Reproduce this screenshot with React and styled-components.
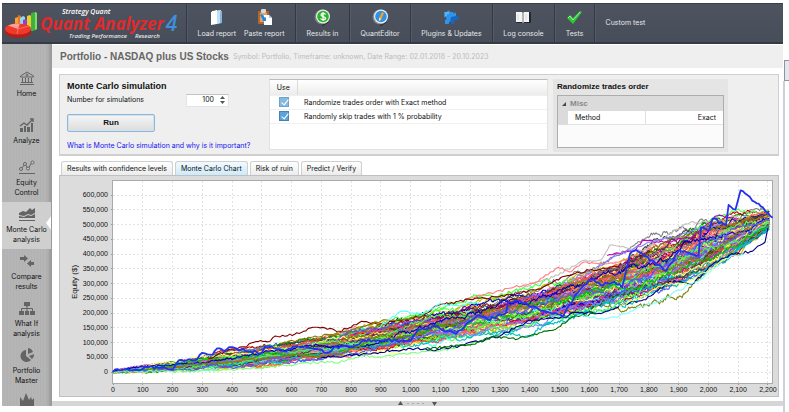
import React from "react";
import styled, { createGlobalStyle, css } from "styled-components";

const Global = createGlobalStyle`
  * { box-sizing: border-box; }
  body { margin: 0; background: #fff; font: 7px/10px Inter, "Liberation Sans", Arial, sans-serif; color: #111; }
  button, input { font: inherit; color: inherit; margin: 0; }
  svg { display: block; flex: none; }
`;

const Shell = styled.div`
  height: 100vh;
  display: flex;
  padding: 3px 0 6px 2px;
  overflow: hidden;
`;
const Window = styled.div`
  flex: 1;
  min-width: 0;
  display: flex;
  flex-direction: column;
`;
const ScrollRail = styled.div`
  width: 6px;
  padding-top: 57px;
  &::before {
    content: "";
    display: block;
    height: 19px;
    margin-left: 1px;
    background: #e3e6ec;
    border: 1px solid #8d93a3;
    border-right: 0;
  }
  &::after {
    content: "";
    display: block;
    width: 2px;
    height: 100%;
    background: #cdd0d8;
  }
`;

/* Toolbar */
const Toolbar = styled.header`
  height: 41px;
  flex: none;
  display: flex;
  background: linear-gradient(#4d535f, #474d59);
  border-top: 1px solid #3a4049;
  border-bottom: 2px solid #353b45;
  color: #e6e8eb;
  overflow: hidden;
`;
const Brand = styled.div`
  width: 184px;
  display: flex;
  padding: 4px 0 0 2px;
  gap: 2px;
  font-family: "Open Sans", "Noto Sans", sans-serif;
  font-style: italic;
`;
const BrandText = styled.div`
  display: flex;
  flex-direction: column;
`;
const BrandTop = styled.div`
  padding-left: 22px;
  font-size: 7px;
  line-height: 7px;
  font-weight: 600;
  color: #fff;
  white-space: nowrap;
`;
const BrandName = styled.div`
  font-size: 17px;
  line-height: 17px;
  font-weight: 700;
  color: #e02a2c;
  white-space: nowrap;
`;
const BrandTag = styled.div`
  display: flex;
  gap: 8px;
  padding-left: 29px;
  font-size: 6px;
  line-height: 8px;
  font-weight: 600;
  color: #e8e8e8;
`;
const BrandVersion = styled.span`
  padding-top: 5px;
  font-size: 21px;
  line-height: 21px;
  font-weight: 600;
  color: #3f8fdd;
`;
const ToolGroup = styled.div`
  display: flex;
  justify-content: center;
  gap: 8px;
  width: ${(p) => p.$width}px;
  border-left: 1px solid #333943;
  box-shadow: inset 1px 0 #555c68;
`;
const ToolButton = styled.button`
  border: 0;
  padding: 5px 0 0;
  background: none;
  display: flex;
  flex-direction: column;
  align-items: center;
  gap: 3px;
  white-space: nowrap;
`;
const TextTool = styled.button`
  border: 0;
  background: none;
  padding: 0 0 0 2px;
`;

/* Side navigation */
const Body = styled.div`
  flex: 1;
  min-height: 0;
  display: flex;
`;
const Side = styled.nav`
  width: 50px;
  flex: none;
  padding-top: 17px;
  overflow: hidden;
  background:
    linear-gradient(90deg, transparent 44px, #0001 47px, #0003 50px),
    repeating-linear-gradient(90deg, #b5b5b5 0 2px, #b2b2b2 2px 3px);
  border-right: 1px solid #9a9a9a;
`;
const SideItem = styled.a`
  position: relative;
  height: 47px;
  display: flex;
  flex-direction: column;
  align-items: center;
  justify-content: center;
  gap: 4px;
  color: #111;
  text-align: center;
  text-decoration: none;
  white-space: pre-line;
  svg { color: #646464; }
  ${(p) =>
    p.$active &&
    css`
      background: #cfcfcf;
      &::after {
        content: "";
        position: absolute;
        right: -1px;
        top: 13px;
        border: solid transparent;
        border-width: 8px 6px 8px 0;
        border-right-color: #fff;
      }
    `}
`;
const NextItem = styled(SideItem)`
  justify-content: flex-start;
  padding-top: 3px;
`;

/* Main column */
const Main = styled.main`
  flex: 1;
  min-width: 0;
  display: flex;
  flex-direction: column;
`;
const TitleBar = styled.div`
  height: 24px;
  flex: none;
  display: flex;
  align-items: center;
  gap: 4px;
  padding: 1px 8px 0;
  background: #efefef;
  border-top: 1px solid #fff;
  color: #bcbcbc;
  white-space: nowrap;
`;
const Title = styled.h1`
  margin: 0;
  font-family: "Liberation Sans", Arial, sans-serif;
  font-size: 10px;
  line-height: 12px;
  color: #666;
`;
const Content = styled.div`
  padding: 6px 4px 0 7px;
`;
const Settings = styled.section`
  height: 82px;
  display: flex;
  background: #efefef;
  border: 1px solid #cfcfcf;
  border-bottom-width: 2px;
  padding: 4px 0 0;
`;
const SimForm = styled.form`
  width: 209px;
  padding: 1px 0 0 7px;
`;
const Heading = styled.h2`
  margin: 0;
  font-family: "Liberation Sans", Arial, sans-serif;
  font-size: 9px;
  line-height: 12px;
  color: #111;
`;
const Field = styled.div`
  display: flex;
  justify-content: space-between;
  align-items: center;
  padding-right: 40px;
  height: 16px;
`;
const Spinner = styled.div`
  display: flex;
  align-items: center;
  width: 43px;
  height: 13px;
  padding-right: 3px;
  background: #fff;
  border: 1px solid #e4e4e4;
  border-top-color: #c2c2c2;
`;
const SpinnerInput = styled.input`
  flex: 1;
  min-width: 0;
  border: 0;
  padding: 0 6px 0 0;
  background: none;
  text-align: right;
`;
const RunButton = styled.button`
  display: block;
  width: 88px;
  height: 18px;
  margin: 6px 0 9px;
  border: 1px solid #8fb6d4;
  border-radius: 2px;
  background: linear-gradient(#f6f6f6, #dcdcdc);
  box-shadow: inset 0 0 0 1px #cfe2f0;
  font-family: "Liberation Sans", Arial, sans-serif;
  font-size: 8px;
  font-weight: 700;
`;
const HelpLink = styled.a`
  color: #1414f0;
  text-decoration: none;
  white-space: nowrap;
`;
const OptionTable = styled.div`
  width: 279px;
  height: 71px;
  background: #fff;
  border: 1px solid #e2e2e2;
  border-top-color: #bdbdbd;
  table { width: 100%; border-collapse: collapse; }
  tr { height: 14px; }
  thead tr { height: 15px; }
  th, td { padding: 1px 7px 0; border-bottom: 1px solid #f0f0f0; text-align: left; font-weight: 400; }
  th { background: linear-gradient(#fff, #ececec); }
  th:first-child { width: 27px; padding: 1px 0 0; border-right: 1px solid #dcdcdc; text-align: center; }
  td:first-child { padding: 0; text-align: center; }
`;
const Check = styled.input`
  appearance: none;
  display: block;
  width: 10px;
  height: 10px;
  margin: 0 auto;
  border: 1px solid #4683ad;
  background: #5ba3d8;
  opacity: ${(p) => (p.$muted ? 0.75 : 1)};
  &::before {
    content: "";
    display: block;
    width: 3px;
    height: 6px;
    margin: 0 0 0 3px;
    border: solid #fff;
    border-width: 0 1px 1px 0;
    transform: rotate(38deg);
  }
`;
const Props = styled.div`
  width: 175px;
  height: 73px;
  margin-left: 5px;
  padding: 2px 4px 0;
  background: #e5e5e5;
`;
const PropsTitle = styled.h3`
  margin: 0 0 2px;
  font-family: "Liberation Sans", Arial, sans-serif;
  font-size: 8px;
  line-height: 12px;
  color: #111;
`;
const PropsBox = styled.div`
  height: 53px;
  background: #fbfbfb;
  border: 1px solid #adadad;
`;
const PropsGroup = styled.div`
  display: flex;
  align-items: center;
  gap: 4px;
  height: 15px;
  padding-left: 4px;
  background: #dbdbdb;
  font-family: "Liberation Sans", Arial, sans-serif;
  font-size: 8px;
  font-weight: 700;
  color: #8a8a8a;
`;
const PropsRow = styled.div`
  display: flex;
  height: 14px;
  padding-left: 10px;
  background: #dbdbdb;
  line-height: 13px;
`;
const PropsCell = styled.div`
  flex: 1;
  padding: 0 7px;
  background: #fff;
  border-bottom: 1px solid #e3e3e3;
  text-align: ${(p) => (p.$value ? "right" : "left")};
  border-left: ${(p) => (p.$value ? "1px solid #e0e0e0" : "0")};
`;

const Tabs = styled.div`
  display: flex;
  gap: 2px;
  padding: 5px 2px 0;
`;
const Tab = styled.button`
  height: 14px;
  padding: 1px 5px 0;
  border: 1px solid #cfcfcf;
  border-bottom: 0;
  border-radius: 3px 3px 0 0;
  background: ${(p) => (p.$active ? "linear-gradient(#f2faff, #cdeafa)" : "linear-gradient(#fff, #ececec)")};
  white-space: nowrap;
`;
const ChartPanel = styled.section`
  background: #dcdcdc;
  border: 1px solid #c0c0c0;
`;
const ChartSvg = styled.svg`
  width: 100%;
  height: auto;
  font-family: "Liberation Sans", Arial, sans-serif;
  font-size: 7px;
  fill: #111;
`;
const Splitter = styled.div`
  margin-top: auto;
  height: 5px;
  flex: none;
  display: flex;
  justify-content: center;
  background: #d6d6d6;
`;

/* Chart data */
const PALETTE = [
  "#ff5555", "#5555ff", "#00c000", "#ffff55", "#ff55ff", "#55ffff", "#ffafaf", "#808080", "#c00000",
  "#0000c0", "#55ff55", "#c0c000", "#c000c0", "#00c0c0", "#404040", "#ff4040", "#8080ff", "#40ff40",
  "#ffff40", "#ff40ff", "#800000", "#008080", "#008000", "#808000", "#800080", "#ff8080", "#ffff80",
];
const LOW = [-2, 0, 3, 7, 12, 20, 31, 42, 55, 72, 88, 100, 114, 134, 156, 182, 202, 226, 262, 296, 345, 400, 478];
const HIGH = [4, 24, 36, 54, 70, 86, 102, 120, 145, 168, 188, 215, 238, 262, 284, 315, 350, 385, 428, 466, 505, 530, 545];

const at = (list, t) => {
  const i = Math.min(Math.floor(t / 100), list.length - 2);
  return list[i] + (list[i + 1] - list[i]) * (t / 100 - i);
};
const px = (t) => 53 + t * 0.2977;
const py = (v) => 196 - v * 0.295;
const makeRandom = (start) => {
  let s = start;
  return () => {
    s = (s * 1664525 + 1013904223) % 4294967296;
    return s / 4294967296;
  };
};
const random = makeRandom(4711);

const simulations = Array.from({ length: 120 }, () => {
  let target = (random() + random()) / 2;
  let q = target;
  let d = "";
  for (let t = 0; t <= 2204; t += 4) {
    if (random() < 0.014) target = 0.04 + (random() * 2 + random()) * 0.307;
    q += (target - q) * 0.02 + (random() - 0.5) * 0.09;
    const lo = at(LOW, Math.min(t, 2200));
    const hi = at(HIGH, Math.min(t, 2200));
    d += `${t ? "L" : "M"}${px(t).toFixed(1)} ${py(lo + (hi - lo) * q + (random() - 0.5) * 5).toFixed(1)}`;
  }
  return { d, color: PALETTE[Math.floor(random() * PALETTE.length)] };
});

const trace = (points, jitter) => {
  let d = "";
  points.forEach(([t, v], i) => {
    if (i === 0) {
      d = `M${px(t).toFixed(1)} ${py(v).toFixed(1)}`;
      return;
    }
    const [t0, v0] = points[i - 1];
    const steps = Math.max(1, Math.round((t - t0) / 8));
    for (let k = 1; k <= steps; k += 1) {
      const f = k / steps;
      const wobble = k === steps ? 0 : (random() - 0.5) * jitter;
      d += `L${px(t0 + (t - t0) * f).toFixed(1)} ${py(v0 + (v - v0) * f + wobble).toFixed(1)}`;
    }
  });
  return d;
};

const OUTLIERS = [
  ["#c0c0c0", [[1380, 290], [1480, 322], [1580, 378], [1640, 380], [1668, 430], [1720, 422], [1780, 412], [1860, 462], [1940, 508], [2010, 505], [2100, 530]]],
  ["#ff8080", [[1180, 245], [1340, 285], [1420, 305], [1495, 355], [1540, 340], [1575, 370], [1680, 368], [1760, 395]]],
  ["#c000c0", [[1660, 395], [1750, 410], [1778, 445], [1850, 440], [1940, 455], [2030, 530], [2100, 520]]],
  ["#8080ff", [[1620, 350], [1680, 390], [1800, 440], [1900, 460], [1940, 475], [2040, 500]]],
  ["#800000", [[320, 45], [400, 78], [440, 85], [480, 103], [520, 102], [545, 122], [610, 128], [640, 138], [680, 152], [760, 138], [800, 152], [835, 172], [890, 162], [1000, 182], [1040, 190], [1090, 225], [1200, 246], [1330, 262], [1420, 278], [1520, 325], [1600, 345], [1700, 358]]],
  ["#808000", [[560, 98], [640, 112], [780, 138], [900, 172], [980, 178], [1060, 192]]],
  ["#55ffff", [[890, 148], [930, 180], [965, 205], [1040, 198], [1100, 232], [1160, 225], [1230, 235]]],
  ["#80ff80", [[0, 0], [250, 3], [420, 10], [560, 20], [640, 32], [760, 32], [840, 55], [900, 50], [1000, 66], [1100, 72], [1200, 95], [1300, 120]]],
  ["#000080", [[700, 48], [850, 62], [1000, 80], [1090, 76], [1180, 92], [1300, 122], [1400, 176], [1500, 182], [1560, 202], [1640, 198], [1720, 232], [1790, 245], [1870, 308], [1950, 300], [2010, 362], [2070, 396], [2140, 408], [2190, 440], [2200, 488]]],
  ["#007000", [[1050, 80], [1200, 92], [1280, 120], [1360, 112], [1440, 134], [1480, 142], [1540, 185], [1620, 198]]],
  ["#80ffff", [[1560, 192], [1640, 182], [1700, 190], [1760, 218], [1840, 240], [1900, 278], [1960, 305], [2060, 385], [2120, 400]]],
  ["#ffff55", [[1700, 222], [1760, 248], [1860, 300], [1920, 300], [2000, 345], [2060, 385]]],
].map(([color, points]) => ({ color, d: trace(points, 9) }));

const EQUITY = trace([
  [0, 0], [15, 10], [98, 9], [108, 18], [200, 9], [222, 40], [283, 43], [300, 65], [334, 58], [350, 80], [373, 71],
  [390, 84], [429, 76], [500, 64], [510, 86], [541, 80], [575, 69], [620, 88], [726, 66], [742, 83], [810, 88],
  [843, 108], [882, 107], [1001, 106], [1024, 142], [1052, 144], [1074, 156], [1152, 129], [1225, 193],
  [1259, 178], [1320, 201], [1328, 238], [1359, 242], [1404, 221], [1511, 187], [1550, 255], [1572, 283],
  [1606, 314], [1639, 295], [1684, 306], [1710, 287], [1737, 402], [1757, 413], [1858, 343], [1903, 413],
  [1967, 396], [1975, 490], [2003, 481], [2014, 520], [2059, 498], [2068, 566], [2091, 551], [2108, 616],
  [2155, 577], [2183, 558], [2216, 523],
], 10);

const X_TICKS = Array.from({ length: 23 }, (_, i) => i * 100);
const Y_TICKS = Array.from({ length: 13 }, (_, i) => i * 50);

function EquityChart() {
  return (
    <ChartSvg viewBox="0 0 718 220" role="img" aria-label="Equity of Monte Carlo simulations">
      <rect x="53" y="5" width="659" height="202" fill="#fff" />
      <g stroke="#e2e2e2" strokeDasharray="2 2" shapeRendering="crispEdges">
        {X_TICKS.slice(1).map((t) => <line key={t} x1={px(t)} x2={px(t)} y1="5" y2="207" />)}
        {Y_TICKS.map((v) => <line key={v} x1="53" x2="712" y1={py(v)} y2={py(v)} />)}
      </g>
      <g stroke="#999" shapeRendering="crispEdges">
        {X_TICKS.map((t) => <line key={t} x1={px(t)} x2={px(t)} y1="207" y2="209" />)}
        {Y_TICKS.map((v) => <line key={v} x1="51" x2="53" y1={py(v)} y2={py(v)} />)}
      </g>
      <rect x="52.5" y="4.5" width="660" height="203" fill="none" stroke="#aaa" />
      <g fill="none" strokeLinejoin="round">
        {simulations.map((s, i) => <path key={i} d={s.d} stroke={s.color} strokeWidth="1.1" />)}
        {OUTLIERS.map((s) => <path key={s.color + s.d.length} d={s.d} stroke={s.color} strokeWidth="1.1" />)}
        <path d={EQUITY} stroke="#2432f0" strokeWidth="1.8" />
      </g>
      <g textAnchor="middle">
        {X_TICKS.map((t) => <text key={t} x={px(t)} y="216">{t.toLocaleString("en-US")}</text>)}
      </g>
      <g textAnchor="end">
        {Y_TICKS.map((v) => <text key={v} x="48" y={py(v) + 2}>{(v * 1000).toLocaleString("en-US")}</text>)}
      </g>
      <text fontSize="8" textAnchor="middle" transform="translate(17 106) rotate(-90)">Equity ($)</text>
    </ChartSvg>
  );
}

/* Icons */
const LogoMark = () => (
  <svg width="34" height="32" viewBox="0 0 34 32">
    <path d="M11 10l3-1v13l-3-1z" fill="#f6a431" />
    <path d="M14 7l3 1v14h-3z" fill="#e8781c" />
    <path d="M16 10l3-2 2 1v13h-5z" fill="#8fd6f5" />
    <path d="M19 12l3-1 2 1v10h-5z" fill="#9a3fc4" />
    <path d="M23 8l3-1 1 1v14h-4z" fill="#e9cf2b" />
    <path d="M27 5l4-1 2 1v16l-4 2h-2z" fill="#3fb13d" />
    <path d="M31 4l2 1v16l-2 1z" fill="#7fdc6c" />
    <path d="M1 21v3c0 7 24 8 26 1v-4z" fill="#b81d17" />
    <ellipse cx="14" cy="21" rx="13" ry="5.500" fill="#ee3a2c" />
    <path d="M14 21L4 17.500A13 5.500 0 0 1 16 15.500z" fill="#ff9d92" />
    <path d="M14 21l11-3M14 21l-1 5" stroke="#ff8278" strokeWidth=".7" />
  </svg>
);
const LoadIcon = () => (
  <svg width="17" height="17" viewBox="0 0 17 17">
    <path d="M4 2l9-1v13l-9 1z" fill="#d7e2ea" />
    <path d="M3 3l6-2v14l-6 1z" fill="#fff" />
    <path d="M9 3l5-1v12l-5 1z" fill="#7fb6e6" />
    <path d="M9 3l3-1v12l-3 1z" fill="#c6def2" />
  </svg>
);
const PasteIcon = () => (
  <svg width="17" height="17" viewBox="0 0 17 17">
    <rect x="2" y="2" width="11" height="13" rx="1" fill="#b3672a" />
    <rect x="4" y="4" width="7" height="9" fill="#d9a673" />
    <rect x="5" y="0" width="5" height="4" rx="1" fill="#d8d8d8" />
    <path d="M8 6h5l3 3v7H8z" fill="#fff" />
    <path d="M13 6v3h3z" fill="#b9c7d4" />
    <path d="M4 6l2-1 3 4 1-1v4H6l1-1z" fill="#2485d8" />
  </svg>
);
const ResultsIcon = () => (
  <svg width="17" height="17" viewBox="0 0 17 17">
    <path d="M2 12l7 5 6-4z" fill="#23272e" />
    <circle cx="8" cy="8" r="7.500" fill="#7d8084" />
    <circle cx="9" cy="7.500" r="7" fill="#e9ece9" />
    <circle cx="9" cy="7.500" r="5.800" fill="#2bb52c" />
    <path d="M11.500 5.500C10.500 4 7 4 7 6s4.500 1.200 4.500 3.200S7.500 11 6.500 9.500M9 3v9" fill="none" stroke="#fff" strokeWidth="1.300" />
  </svg>
);
const EditorIcon = () => (
  <svg width="17" height="17" viewBox="0 0 17 17">
    <path d="M2 12l7 5 6-4z" fill="#23272e" />
    <circle cx="8" cy="8" r="7.500" fill="#85888c" />
    <circle cx="9" cy="7.500" r="7" fill="#eceff2" />
    <circle cx="9" cy="7.500" r="5.800" fill="#2d93e8" />
    <path d="M10 3l2 1-3 7-2 1V9z" fill="#f0a02c" />
    <path d="M7 9l2 1-2 2z" fill="#fff3d6" />
  </svg>
);
const PluginIcon = () => (
  <svg width="17" height="17" viewBox="0 0 17 17">
    <path d="M1 3h3c0-2 3-2 3 0h3v2c1-2 3-2 3 0v2h3v3h-2c-1 0-1 2-3 1v4H8c1-3-3-3-2 0H2v-4c2 0 2-3 0-3H1z" fill="#2f95ea" />
    <path d="M8 8l5-1h3v3h-2c-1 0-1 2-3 1v4H8c0-2 0-2-1-2z" fill="#1966c0" />
    <path d="M2 4h4M3 5v2" stroke="#8fd0fa" />
  </svg>
);
const LogIcon = () => (
  <svg width="17" height="17" viewBox="0 0 17 17">
    <rect x="1" y="3" width="15" height="11" rx="1" fill="#23272d" />
    <path d="M1 3h6l1 1 1-1h5v10H9l-1 1-1-1H1z" fill="#f5f5f5" />
    <path d="M8 4v9" stroke="#777" />
    <path d="M3 5v6M11 5v6" stroke="#d8d8d8" />
  </svg>
);
const TestIcon = () => (
  <svg width="17" height="17" viewBox="0 0 17 17">
    <path d="M1 9l3-3 3 3 7-7 2 1-9 12z" fill="#2fc73a" />
    <path d="M2 9l2-2 3 4 7-8" fill="none" stroke="#98f08e" />
  </svg>
);

const Glyph = ({ children }) => (
  <svg width="16" height="14" viewBox="0 0 16 14" fill="none" stroke="currentColor">{children}</svg>
);
const HomeGlyph = () => (
  <Glyph>
    <path d="M1.500 5L8 1l6.500 4v1h-13zM3.500 7v4M6.500 7v4M9.500 7v4M12.500 7v4M2 11.500h12M1 13.500h14" />
    <circle cx="8" cy="4" r="1" />
  </Glyph>
);
const AnalyzeGlyph = () => (
  <Glyph>
    <path d="M1 14v-4h3v4zM5 14V8h2v6zM8 14V9h3v5zM12 14V5h2v9z" fill="currentColor" stroke="none" />
    <path d="M1 8l4-3 3 2 6-6M11 1h3v3" strokeWidth="1.400" />
  </Glyph>
);
const EquityGlyph = () => (
  <Glyph>
    <path d="M2 9l4-5 3 5 4-7M0 13.500h16" />
    <g fill="#c4c4c4"><circle cx="2" cy="9" r="1.500" /><circle cx="6" cy="4" r="1.500" /><circle cx="9" cy="8.500" r="1.500" /><circle cx="13.500" cy="2.500" r="1.500" /></g>
  </Glyph>
);
const MonteGlyph = () => (
  <Glyph>
    <path d="M0 6l4-2 3 1 4-4 2 2 3-2v5l-4 2-3-1-4 2-5-1zM0 9l5 1 4-2 3 1 4-2v4H0z" fill="currentColor" stroke="none" />
    <path d="M0 13.500h16" />
  </Glyph>
);
const CompareGlyph = () => (
  <Glyph><path d="M1 3h4V1l4 3.500L5 8V6H1zM15 8h-3V6L8 9.500l4 3.500v-2h3z" fill="currentColor" stroke="none" /></Glyph>
);
const WhatIfGlyph = () => (
  <Glyph>
    <path d="M5 1h6v4H9L8 6 7 5H5zM0 10h5v4H0zM6 10h4v4H6zM11 10h5v4h-5z" fill="currentColor" stroke="none" />
    <path d="M8 5v5M2.500 10V7.500h11V10" />
  </Glyph>
);
const PieGlyph = () => (
  <Glyph>
    <path d="M7 2v6l5 4A6 6 0 1 1 7 2z" fill="currentColor" stroke="none" />
    <path d="M9 0a6 6 0 0 1 5 4L9 6zM10 8l5-2a6 6 0 0 1-2 5z" fill="currentColor" stroke="none" />
  </Glyph>
);
const CrownGlyph = () => (
  <Glyph><path d="M1 14V4l3 4 3-8 3 7 2-3 1 3 2-2v9z" fill="currentColor" stroke="none" /></Glyph>
);

const TOOLS = [
  { width: 109, items: [["Load report", LoadIcon], ["Paste report", PasteIcon]] },
  { width: 54, items: [["Results in", ResultsIcon]] },
  { width: 61, items: [["QuantEditor", EditorIcon]] },
  { width: 82, items: [["Plugins & Updates", PluginIcon]] },
  { width: 62, items: [["Log console", LogIcon]] },
  { width: 40, items: [["Tests", TestIcon]] },
];
const NAV = [
  ["Home", HomeGlyph],
  ["Analyze", AnalyzeGlyph],
  ["Equity\nControl", EquityGlyph],
  ["Monte Carlo\nanalysis", MonteGlyph],
  ["Compare\nresults", CompareGlyph],
  ["What If\nanalysis", WhatIfGlyph],
  ["Portfolio\nMaster", PieGlyph],
];
const OPTIONS = ["Randomize trades order with Exact method", "Randomly skip trades with 1 % probability"];
const TABS = ["Results with confidence levels", "Monte Carlo Chart", "Risk of ruin", "Predict / Verify"];

export default function App() {
  return (
    <Shell>
      <Global />
      <Window>
        <Toolbar>
          <Brand>
            <LogoMark />
            <BrandText>
              <BrandTop>Strategy Quant</BrandTop>
              <BrandName>Quant Analyzer</BrandName>
              <BrandTag><span>Trading Performance</span><span>Research</span></BrandTag>
            </BrandText>
            <BrandVersion>4</BrandVersion>
          </Brand>
          {TOOLS.map((group) => (
            <ToolGroup key={group.width} $width={group.width}>
              {group.items.map(([label, Icon]) => (
                <ToolButton key={label} type="button"><Icon />{label}</ToolButton>
              ))}
            </ToolGroup>
          ))}
          <ToolGroup $width={60}><TextTool type="button">Custom test</TextTool></ToolGroup>
        </Toolbar>
        <Body>
          <Side>
            {NAV.map(([label, Icon]) => (
              <SideItem key={label} href="#" $active={Icon === MonteGlyph}>
                <Icon />
                <span>{label}</span>
              </SideItem>
            ))}
            <NextItem href="#"><CrownGlyph /></NextItem>
          </Side>
          <Main>
            <TitleBar>
              <Title>Portfolio - NASDAQ plus US Stocks</Title>
              <span>Symbol: Portfolio, Timeframe: unknown, Date Range: 02.01.2018 - 20.10.2023</span>
            </TitleBar>
            <Content>
              <Settings>
                <SimForm>
                  <Heading>Monte Carlo simulation</Heading>
                  <Field>
                    <label htmlFor="count">Number for simulations</label>
                    <Spinner>
                      <SpinnerInput id="count" defaultValue="100" />
                      <svg width="5" height="8" viewBox="0 0 5 8" fill="#555"><path d="M0 3l2.500-3L5 3zM0 5l2.500 3L5 5z" /></svg>
                    </Spinner>
                  </Field>
                  <RunButton type="button">Run</RunButton>
                  <HelpLink href="#">What is Monte Carlo simulation and why is it important?</HelpLink>
                </SimForm>
                <OptionTable>
                  <table>
                    <thead><tr><th>Use</th><th aria-label="Option" /></tr></thead>
                    <tbody>
                      {OPTIONS.map((text, i) => (
                        <tr key={text}>
                          <td><Check type="checkbox" id={`opt${i}`} defaultChecked $muted={i === 0} /></td>
                          <td><label htmlFor={`opt${i}`}>{text}</label></td>
                        </tr>
                      ))}
                    </tbody>
                  </table>
                </OptionTable>
                <Props>
                  <PropsTitle>Randomize trades order</PropsTitle>
                  <PropsBox>
                    <PropsGroup>
                      <svg width="4" height="4" viewBox="0 0 4 4"><path d="M4 0v4H0z" fill="#444" /></svg>
                      Misc
                    </PropsGroup>
                    <PropsRow>
                      <PropsCell>Method</PropsCell>
                      <PropsCell $value>Exact</PropsCell>
                    </PropsRow>
                  </PropsBox>
                </Props>
              </Settings>
              <Tabs role="tablist">
                {TABS.map((name, i) => (
                  <Tab key={name} type="button" role="tab" aria-selected={i === 1} $active={i === 1}>{name}</Tab>
                ))}
              </Tabs>
              <ChartPanel><EquityChart /></ChartPanel>
            </Content>
            <Splitter>
              <svg width="40" height="5" viewBox="0 0 40 5" fill="#555">
                <path d="M0 4l2.500-4L5 4zM34 1h5l-2.500 4z" />
                <path d="M9 2.500h2M14 2.500h2M19 2.500h2M24 2.500h2" stroke="#aaa" />
              </svg>
            </Splitter>
          </Main>
        </Body>
      </Window>
      <ScrollRail />
    </Shell>
  );
}
